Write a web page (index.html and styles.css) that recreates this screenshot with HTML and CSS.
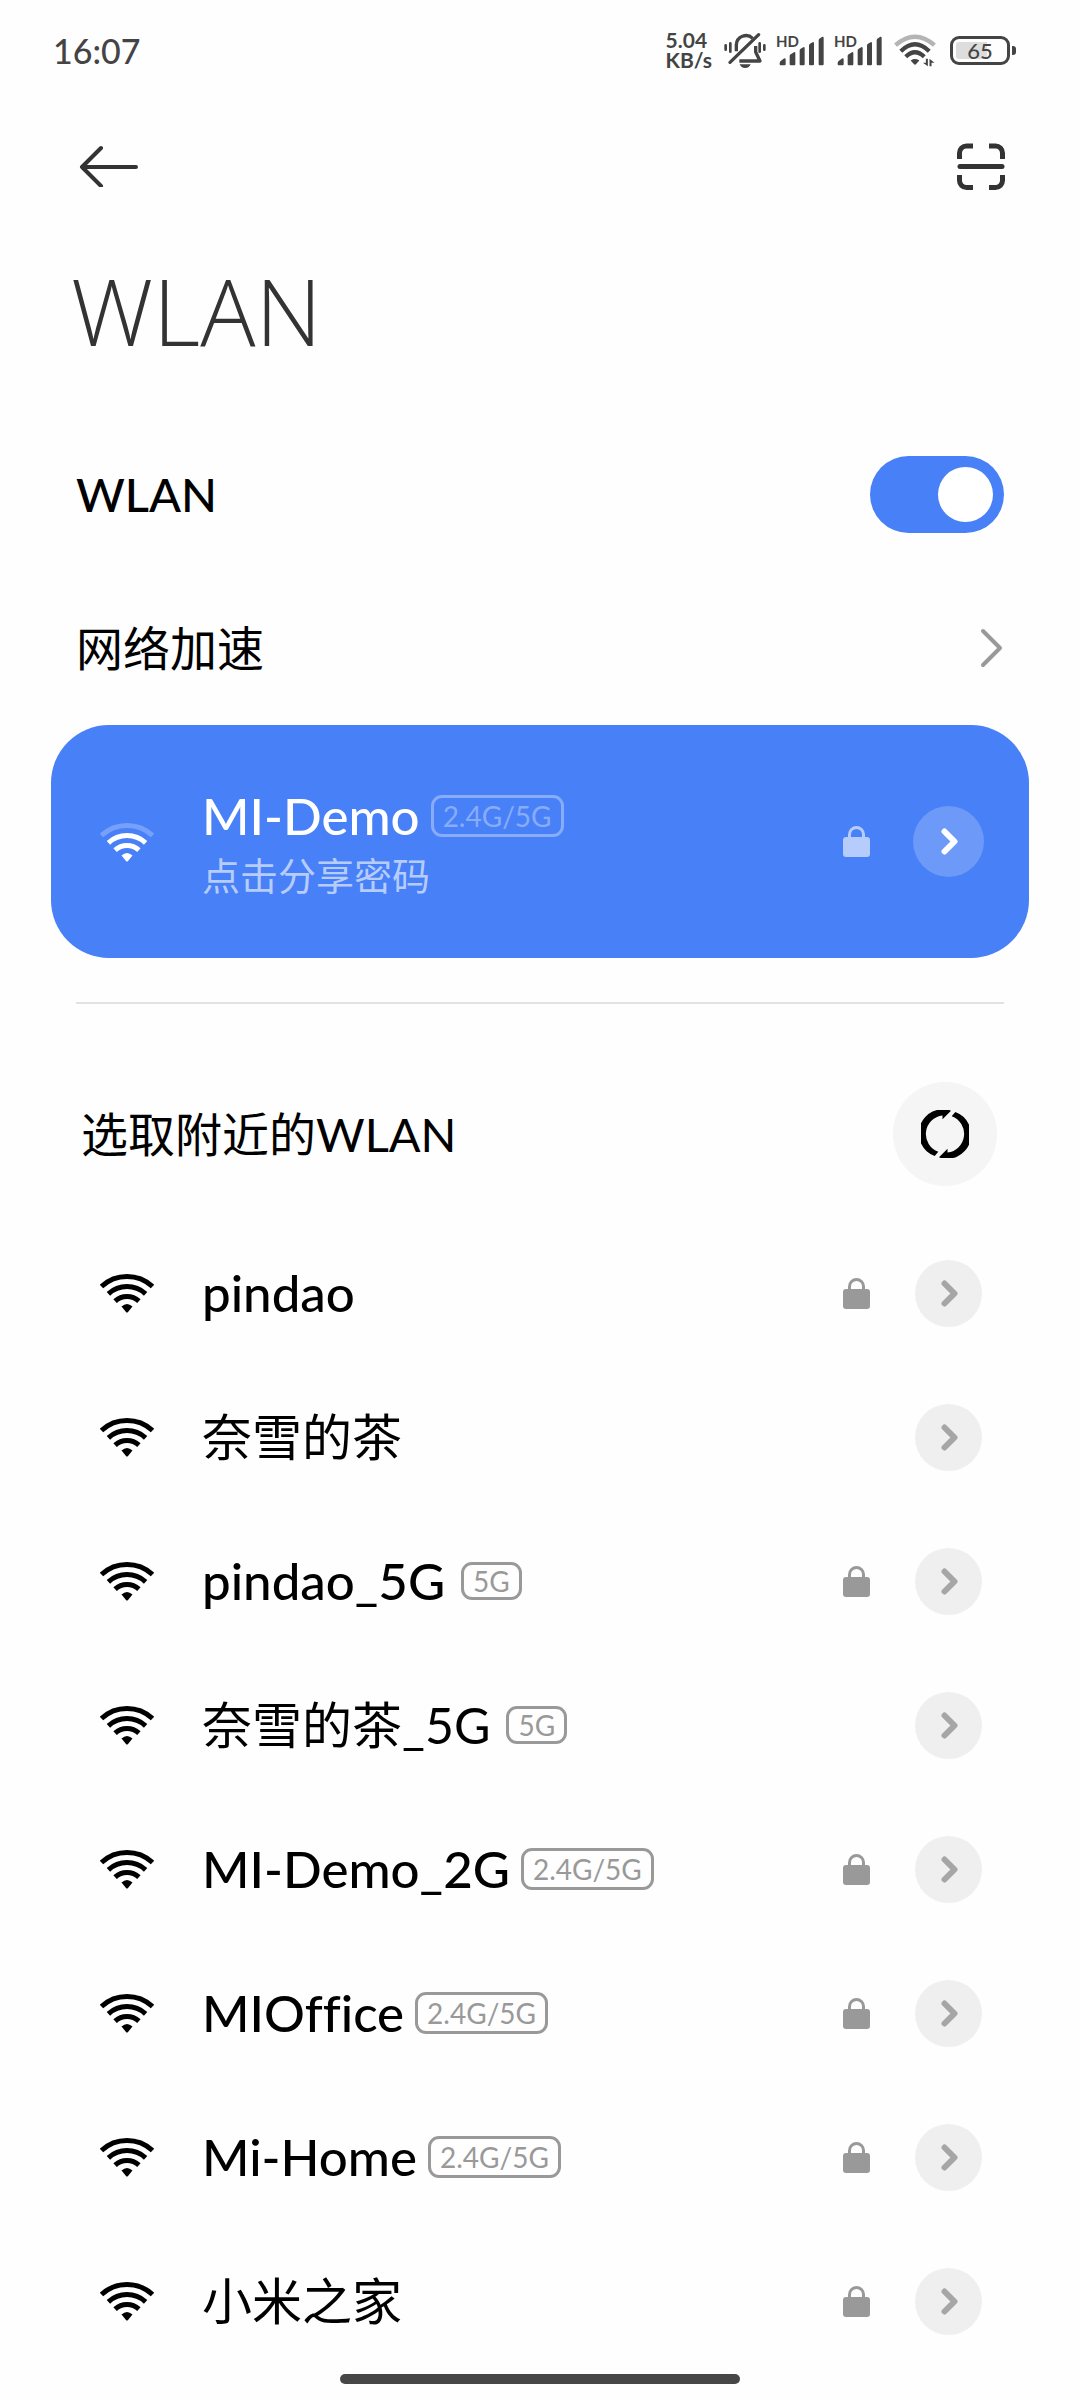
FILE: index.html
```html
<!DOCTYPE html>
<html lang="zh-CN">
<head>
<meta charset="utf-8">
<meta name="viewport" content="width=device-width, initial-scale=1">
<title>WLAN</title>
<link rel="stylesheet" href="styles.css">
</head>
<body>
<svg class="sprite" aria-hidden="true">
  <symbol id="wifi" viewBox="0 -1 54 40">
    <g fill="none" stroke="currentColor" stroke-width="5">
      <path d="M1.500 12.500A37.500 37.500 0 0 1 52.500 12.500"/>
      <path d="M8.400 19.800A27.500 27.500 0 0 1 45.600 19.800"/>
      <path d="M15.100 27.200A17.500 17.500 0 0 1 38.900 27.200"/>
    </g>
    <path fill="currentColor" d="M21.500 32.600Q27 27.600 32.500 32.600L28 38Q27 39 26 38Z"/>
  </symbol>
  <symbol id="wifi-weak" viewBox="0 -1 54 40">
    <g fill="none" stroke="currentColor" stroke-width="5">
      <path opacity=".25" d="M1.500 12.500A37.500 37.500 0 0 1 52.500 12.500"/>
      <path d="M8.400 19.800A27.500 27.500 0 0 1 45.600 19.800"/>
      <path d="M15.100 27.200A17.500 17.500 0 0 1 38.900 27.200"/>
    </g>
    <path fill="currentColor" d="M21.500 32.600Q27 27.600 32.500 32.600L28 38Q27 39 26 38Z"/>
  </symbol>
  <symbol id="lock" viewBox="0 0 27 31">
    <path fill="none" stroke="currentColor" stroke-width="3" d="M6.500 12V8.500A7 7 0 0 1 20.500 8.500V12"/>
    <rect fill="currentColor" y="11" width="27" height="20" rx="3"/>
  </symbol>
  <symbol id="chevron" viewBox="-2 0 19 27">
    <path fill="none" stroke="currentColor" stroke-width="6" stroke-linecap="round" stroke-linejoin="round" d="M3.500 3.500L13.500 13.500L3.500 23.500"/>
  </symbol>
  <symbol id="signal" viewBox="0 0 138 92">
    <path fill="currentColor" d="M5 84Q5 80 9 77L18 70Q23 68 23 73V87Q23 90 20 90H8Q5 90 5 87ZM35 62Q35 59 38 57L48 51Q52 50 52 54V87Q52 90 49 90H38Q35 90 35 87ZM65 46Q65 43 68 41L76 36Q80 35 80 39V87Q80 90 77 90H68Q65 90 65 87ZM93 31Q93 28 96 26L104 21Q108 20 108 24V87Q108 90 105 90H96Q93 90 93 87ZM122 15Q122 12 125 10L133 5Q137 4 137 8V87Q137 90 134 90H125Q122 90 122 87Z"/>
  </symbol>
</svg>

<header class="status-bar">
  <time class="clock">16:07</time>
  <div class="status-icons">
    <span class="speed">5.04<br>KB/s</span>
    <svg class="bell" viewBox="0 0 126 108" role="img" aria-label="静音">
      <g fill="none" stroke="currentColor" stroke-width="10">
        <path d="M37 58V38A29 29 0 0 1 86 19"/>
        <path d="M95 42V60L108 87H46" stroke-linejoin="round"/>
        <path d="M104 8L18 91" stroke-linecap="round"/>
        <path stroke-width="8" stroke-linecap="round" d="M5 40V53M19 34V59M107 34V59M121 40V53"/>
      </g>
      <path fill="currentColor" d="M47 97H80Q76 108 63.500 108Q51 108 47 97Z"/>
    </svg>
    <span class="cell"><span class="hd">HD</span><svg><use href="#signal"/></svg></span>
    <span class="cell"><span class="hd">HD</span><svg><use href="#signal"/></svg></span>
    <svg class="status-wifi" viewBox="0 0 126 100" role="img" aria-label="WLAN">
      <g fill="none" stroke="currentColor" stroke-width="13">
        <path stroke="#b4b4b4" d="M4 34Q63 -17 122 34"/>
        <path d="M20 52Q63 10 106 52"/>
        <path d="M35 69Q63 42 91 69"/>
      </g>
      <path fill="currentColor" d="M50 80Q63 71 76 80L66 92Q63 95 60 92Z"/>
      <path fill="currentColor" d="M96 75H102V98L87 87H96ZM107 98V75L122 87H113V98Z"/>
    </svg>
    <span class="battery"><span class="battery-level">65</span></span>
  </div>
</header>

<nav class="toolbar">
  <button class="icon-button" type="button" aria-label="返回">
    <svg width="60" height="42" viewBox="0 0 60 42"><path fill="none" stroke="#333" stroke-width="4" stroke-linecap="round" stroke-linejoin="round" d="M22 3L3 22L22 41M3 22H57"/></svg>
  </button>
  <button class="icon-button" type="button" aria-label="扫一扫">
    <svg width="48" height="48" viewBox="0 0 48 48"><g fill="none" stroke="#333" stroke-width="5"><path d="M2.500 17V11A7 7 0 0 1 9.500 4H16M32 4H38.500A7 7 0 0 1 45.500 11V17M45.500 33V38.500A7 7 0 0 1 38.500 45.500H32M16 45.500H9.500A7 7 0 0 1 2.500 38.500V33"/><path stroke-linecap="round" d="M3 24.500H45"/></g></svg>
  </button>
</nav>

<main>
  <h1 class="title">WLAN</h1>
  <label class="setting">
    <span>WLAN</span>
    <input class="switch" type="checkbox" role="switch" checked>
  </label>
  <a class="setting setting-han" href="#boost">
    <span>网络加速</span>
    <svg width="24" height="40" viewBox="0 0 24 40"><path fill="none" stroke="#999" stroke-width="4" stroke-linecap="round" stroke-linejoin="round" d="M3 3L20 20L3 37"/></svg>
  </a>

  <section class="network connected">
    <button class="join" type="button">
      <svg class="wifi"><use href="#wifi-weak"/></svg>
      <span class="label">
        <span class="name-line"><span class="name">MI-Demo</span><span class="tag tag-dual">2.4G/5G</span></span>
        <span class="hint">点击分享密码</span>
      </span>
    </button>
    <svg class="lock"><use href="#lock"/></svg>
    <button class="details" type="button" aria-label="详情"><svg class="chevron"><use href="#chevron"/></svg></button>
  </section>

  <hr class="divider">

  <div class="nearby">
    <h2>选取附近的WLAN</h2>
    <button class="refresh" type="button" aria-label="刷新">
      <svg width="48" height="48" viewBox="0 0 48 48"><path id="half" d="M30 .7A24 24 0 0 0 13.700 46L17.300 41.700A18.700 18.700 0 0 1 21.500 5.500V9.300Z"/><use href="#half" transform="rotate(180 24 24)"/></svg>
    </button>
  </div>

  <ul class="networks">
    <li class="network">
      <button class="join" type="button"><svg class="wifi"><use href="#wifi"/></svg><span class="name">pindao</span></button>
      <svg class="lock"><use href="#lock"/></svg>
      <button class="details" type="button" aria-label="详情"><svg class="chevron"><use href="#chevron"/></svg></button>
    </li>
    <li class="network">
      <button class="join" type="button"><svg class="wifi"><use href="#wifi"/></svg><span class="name name-han">奈雪的茶</span></button>
      <button class="details" type="button" aria-label="详情"><svg class="chevron"><use href="#chevron"/></svg></button>
    </li>
    <li class="network">
      <button class="join" type="button"><svg class="wifi"><use href="#wifi"/></svg><span class="name">pindao_5G</span><span class="tag">5G</span></button>
      <svg class="lock"><use href="#lock"/></svg>
      <button class="details" type="button" aria-label="详情"><svg class="chevron"><use href="#chevron"/></svg></button>
    </li>
    <li class="network">
      <button class="join" type="button"><svg class="wifi"><use href="#wifi"/></svg><span class="name name-han">奈雪的茶_5G</span><span class="tag">5G</span></button>
      <button class="details" type="button" aria-label="详情"><svg class="chevron"><use href="#chevron"/></svg></button>
    </li>
    <li class="network">
      <button class="join" type="button"><svg class="wifi"><use href="#wifi"/></svg><span class="name">MI-Demo_2G</span><span class="tag tag-dual">2.4G/5G</span></button>
      <svg class="lock"><use href="#lock"/></svg>
      <button class="details" type="button" aria-label="详情"><svg class="chevron"><use href="#chevron"/></svg></button>
    </li>
    <li class="network">
      <button class="join" type="button"><svg class="wifi"><use href="#wifi"/></svg><span class="name">MIOffice</span><span class="tag tag-dual">2.4G/5G</span></button>
      <svg class="lock"><use href="#lock"/></svg>
      <button class="details" type="button" aria-label="详情"><svg class="chevron"><use href="#chevron"/></svg></button>
    </li>
    <li class="network">
      <button class="join" type="button"><svg class="wifi"><use href="#wifi"/></svg><span class="name">Mi-Home</span><span class="tag tag-dual">2.4G/5G</span></button>
      <svg class="lock"><use href="#lock"/></svg>
      <button class="details" type="button" aria-label="详情"><svg class="chevron"><use href="#chevron"/></svg></button>
    </li>
    <li class="network">
      <button class="join" type="button"><svg class="wifi"><use href="#wifi"/></svg><span class="name name-han">小米之家</span></button>
      <svg class="lock"><use href="#lock"/></svg>
      <button class="details" type="button" aria-label="详情"><svg class="chevron"><use href="#chevron"/></svg></button>
    </li>
  </ul>
</main>

<div class="home-indicator"></div>
</body>
</html>
```
FILE: styles.css
```css
* {
  box-sizing: border-box;
}

body {
  margin: 0;
  background: #fefefe;
  color: #000;
  font-family: Lato, "Noto Sans CJK SC", sans-serif;
  font-variant-ligatures: none;
}

button {
  padding: 0;
  border: 0;
  background: none;
  color: inherit;
  font: inherit;
  font-variant-ligatures: none;
  text-align: left;
}

svg {
  display: block;
  flex: none;
}

.sprite {
  position: absolute;
  width: 0;
  height: 0;
}

/* Status bar */
.status-bar {
  display: flex;
  align-items: center;
  justify-content: space-between;
  height: 100px;
  padding: 0 64px 0 53px;
  color: #444;
}

.clock {
  font-size: 34px;
  font-weight: 500;
}

.status-icons {
  display: flex;
  align-items: center;
  gap: 12px;
}

.speed {
  font-size: 21px;
  font-weight: 700;
  line-height: 20px;
}

.bell {
  width: 42px;
  height: 36px;
}

.cell {
  position: relative;
}

.cell svg {
  width: 46px;
  height: 31px;
}

.hd {
  position: absolute;
  top: -1px;
  left: -2px;
  font-size: 15px;
  font-weight: 700;
  line-height: 15px;
}

.status-wifi {
  width: 42px;
  height: 33px;
}

.battery {
  position: relative;
  display: flex;
  width: 60px;
  height: 29px;
  margin: 0 6px 0 2px;
  padding: 3px;
  border: 3px solid currentColor;
  border-radius: 9px;
}

.battery::after {
  content: "";
  position: absolute;
  top: 7px;
  right: -9px;
  width: 4px;
  height: 9px;
  border-radius: 0 3px 3px 0;
  background: currentColor;
}

.battery-level {
  flex: 1;
  border-radius: 3px;
  background: linear-gradient(to right, #ddd 65%, transparent 65%);
  font-size: 22px;
  font-weight: 500;
  line-height: 17px;
  text-align: center;
}

/* Page header */
.toolbar {
  display: flex;
  align-items: center;
  justify-content: space-between;
  height: 132px;
  padding: 0 75px 0 79px;
}

.title {
  margin: 0;
  padding: 25px 71px 52px;
  color: #333;
  font-family: "Open Sans", "Noto Sans CJK SC", sans-serif;
  font-size: 92px;
  font-weight: 300;
  line-height: 108px;
}

.setting {
  display: flex;
  align-items: center;
  justify-content: space-between;
  height: 154px;
  padding: 0 76px;
  color: inherit;
  font-size: 47px;
  font-weight: 500;
  line-height: 60px;
  text-decoration: none;
}

.setting-han {
  font-weight: 400;
}

.switch {
  display: flex;
  align-items: center;
  justify-content: flex-end;
  width: 134px;
  height: 77px;
  margin: 0;
  padding: 11px;
  border-radius: 39px;
  background: #4880f7;
  appearance: none;
}

.switch::before {
  content: "";
  width: 55px;
  height: 55px;
  border-radius: 50%;
  background: #fff;
}

.switch:not(:checked) {
  justify-content: flex-start;
  background: #ddd;
}

/* Networks */
.network {
  display: flex;
  align-items: center;
  height: 144px;
  padding: 0 98px 0 100px;
}

.join {
  display: flex;
  flex: 1;
  align-items: center;
  min-width: 0;
}

.wifi {
  width: 54px;
  height: 40px;
  margin-right: 48px;
}

.name {
  font-size: 51px;
  font-weight: 500;
  line-height: 60px;
  white-space: nowrap;
}

.name-han {
  font-size: 50px;
  font-weight: 400;
}

.name-line {
  display: flex;
  align-items: center;
}

.tag {
  height: 38px;
  margin-left: 16px;
  padding: 0 9px;
  border: 3px solid #999;
  border-radius: 11px;
  color: #999;
  font-size: 28px;
  line-height: 32px;
}

.tag-dual {
  height: 42px;
  margin-left: 11px;
  line-height: 36px;
}

.lock {
  width: 27px;
  height: 31px;
  color: #999;
}

.details {
  display: grid;
  place-items: center;
  width: 67px;
  height: 67px;
  margin-left: 45px;
  border-radius: 50%;
  background: #efefef;
  color: #a6a6a6;
}

.chevron {
  width: 19px;
  height: 27px;
}

.connected {
  height: 233px;
  margin: 0 51px 44px;
  padding: 0 45px 0 49px;
  border-radius: 58px;
  background: #4880f7;
  color: #fff;
}

.label {
  display: block;
  padding-top: 6px;
}

.connected .tag {
  border-color: #88acfa;
  color: #88acfa;
}

.hint {
  display: block;
  color: #b6ccfc;
  font-size: 38px;
  line-height: 58px;
}

.connected .lock {
  color: #b6ccfc;
}

.connected .details {
  width: 71px;
  height: 71px;
  margin-left: 43px;
  background: #6d99f8;
  color: #fff;
}

.divider {
  height: 2px;
  margin: 0 76px;
  border: 0;
  background: #e2e2e2;
}

.nearby {
  display: flex;
  align-items: center;
  justify-content: space-between;
  padding: 78px 83px 35px 81px;
}

.nearby h2 {
  margin: 0;
  font-size: 47px;
  font-weight: 400;
  line-height: 60px;
}

.refresh {
  display: grid;
  place-items: center;
  width: 104px;
  height: 104px;
  border-radius: 50%;
  background: #f5f5f5;
}

.networks {
  margin: 0;
  padding: 0;
  list-style: none;
}

.home-indicator {
  width: 400px;
  height: 10px;
  margin: 1px auto 16px;
  border-radius: 5px;
  background: #474747;
}
```
